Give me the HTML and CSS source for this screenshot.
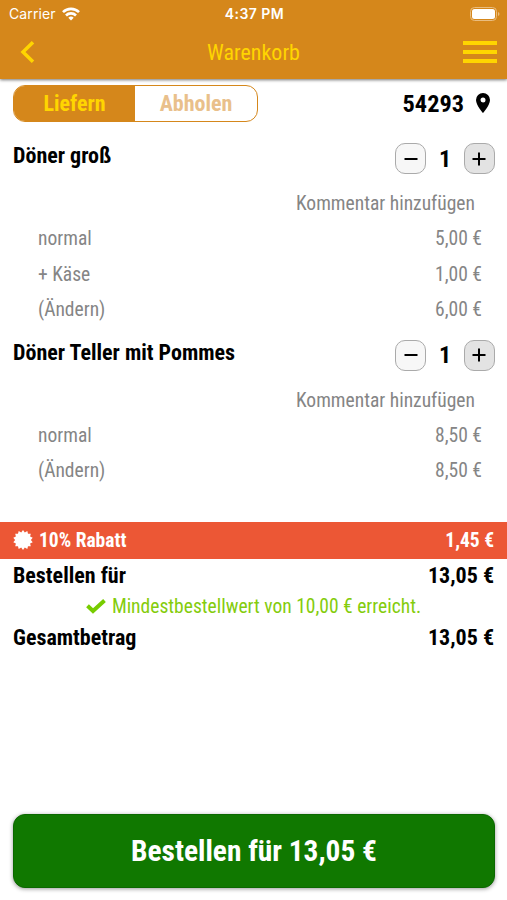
FILE: index.html
```html
<!DOCTYPE html>
<html lang="de">
<head>
    <meta charset="UTF-8">
    <meta name="viewport" content="width=device-width, initial-scale=1.0">
    <title>Warenkorb</title>
    <link rel="stylesheet" href="styles.css">
</head>
<body>
    <header class="header">
        <div class="statusbar">
            <div class="carrier">
                <span>Carrier</span>
                <svg width="18" height="14" viewBox="0 0 18 14" fill="none" stroke="#fff" stroke-width="2.6">
                    <path d="M1 5.2a11.3 11.3 0 0 1 16 0"/>
                    <path d="M4 8.5a7 7 0 0 1 10 0"/>
                    <path d="M6.3 10.8a3.8 3.8 0 0 1 5.4 0L9 13.6z" fill="#fff" stroke="none"/>
                </svg>
            </div>
            <div class="clock">4:37 PM</div>
            <svg class="battery" width="30" height="14" viewBox="0 0 30 14">
                <rect x="0.5" y="0.5" width="26" height="13" rx="4" fill="none" stroke="#e9bd80"/>
                <rect x="2" y="2" width="23" height="10" rx="2.5" fill="#fff"/>
                <path d="M28 5v4q1.500-.5 1.500-2T28 5z" fill="#e9bd80"/>
            </svg>
        </div>
        <div class="navbar">
            <svg class="back" width="16" height="24" viewBox="0 0 16 24" fill="none" stroke="#ffd500" stroke-width="3.500">
                <path d="M14 2.200L4 12l10 9.800"/>
            </svg>
            <h1>Warenkorb</h1>
            <div class="menu"><i></i><i></i><i></i></div>
        </div>
    </header>

    <main class="cart">
        <div class="toolbar">
            <div class="switch">
                <div class="option active">Liefern</div>
                <div class="option">Abholen</div>
            </div>
            <div class="location">
                <span>54293</span>
                <svg width="14" height="20" viewBox="0 0 14 20">
                    <path fill-rule="evenodd" d="M7 0a7 7 0 0 0-7 7c0 5.200 7 13 7 13s7-7.800 7-13a7 7 0 0 0-7-7zm0 4.500a2.500 2.500 0 1 1 0 5 2.500 2.500 0 0 1 0-5z"/>
                </svg>
            </div>
        </div>

        <section class="item">
            <div class="item-head">
                <h2>Döner groß</h2>
                <div class="stepper">
                    <button class="minus"><svg width="16" height="16" viewBox="0 0 16 16"><path d="M1.500 8h13"/></svg></button>
                    <span class="count">1</span>
                    <button class="plus"><svg width="16" height="16" viewBox="0 0 16 16"><path d="M1.500 8h13M8 1.500v13"/></svg></button>
                </div>
            </div>
            <div class="comment">Kommentar hinzufügen</div>
            <div class="line"><span>normal</span><span>5,00 €</span></div>
            <div class="line"><span>+ Käse</span><span>1,00 €</span></div>
            <div class="line"><span>(Ändern)</span><span>6,00 €</span></div>
        </section>

        <section class="item">
            <div class="item-head">
                <h2>Döner Teller mit Pommes</h2>
                <div class="stepper">
                    <button class="minus"><svg width="16" height="16" viewBox="0 0 16 16"><path d="M1.500 8h13"/></svg></button>
                    <span class="count">1</span>
                    <button class="plus"><svg width="16" height="16" viewBox="0 0 16 16"><path d="M1.500 8h13M8 1.500v13"/></svg></button>
                </div>
            </div>
            <div class="comment">Kommentar hinzufügen</div>
            <div class="line"><span>normal</span><span>8,50 €</span></div>
            <div class="line"><span>(Ändern)</span><span>8,50 €</span></div>
        </section>
    </main>

    <div class="discount">
        <svg width="20" height="20" viewBox="-10 -10 20 20">
            <path fill="#fff" d="M0-10L1.800-7.600 4.300-9 5-6.200 7.800-6.200 7.100-3.400 9.700-2.200 7.900 0 9.700 2.200 7.100 3.400 7.800 6.200 5 6.200 4.300 9 1.800 7.600 0 10-1.800 7.600-4.300 9-5 6.200-7.800 6.200-7.100 3.400-9.700 2.200-7.900 0-9.700-2.200-7.100-3.400-7.800-6.200-5-6.200-4.300-9-1.800-7.600z"/>
        </svg>
        <span class="label">10% Rabatt</span>
        <span>1,45 €</span>
    </div>

    <div class="total"><span>Bestellen für</span><span>13,05 €</span></div>
    <div class="minimum">
        <svg width="20" height="15" viewBox="0 0 20 15" fill="none" stroke="#77cc00" stroke-width="4">
            <path d="M1.500 6.800l5.500 5.200L18.500 1.500"/>
        </svg>
        <span>Mindestbestellwert von 10,00 € erreicht.</span>
    </div>
    <div class="total"><span>Gesamtbetrag</span><span>13,05 €</span></div>

    <button class="order">Bestellen für 13,05 €</button>
</body>
</html>
```
FILE: styles.css
```css
* {
    box-sizing: border-box;
}

body {
    font-family: 'Roboto Condensed', Roboto, sans-serif;
    font-stretch: 75%;
    margin: 0;
    height: 900px;
    display: flex;
    flex-direction: column;
    background: #fff;
    color: #000;
    overflow: hidden;
    white-space: nowrap;
}

h1, h2 {
    margin: 0;
    font-weight: normal;
}

svg {
    display: block;
    flex: none;
}

.header {
    height: 79px;
    flex: none;
    background: #d5871b;
    box-shadow: 0 1px 3px rgba(0, 0, 0, 0.55);
}

.statusbar {
    display: grid;
    grid-template-columns: 1fr auto 1fr;
    align-items: center;
    height: 27px;
    padding: 0 7px 0 9px;
    color: #fff;
    font-family: Inter, sans-serif;
    font-stretch: 100%;
    font-size: 14px;
}

.carrier {
    display: flex;
    align-items: center;
    gap: 6px;
    letter-spacing: 0.1px;
}

.clock {
    font-weight: 600;
    letter-spacing: 0.45px;
}

.battery {
    justify-self: end;
}

.navbar {
    display: grid;
    grid-template-columns: 1fr auto 1fr;
    align-items: center;
    height: 50px;
    padding: 0 10px;
}

.back {
    margin-left: 9px;
}

h1 {
    color: #ffd500;
    font-size: 22px;
}

.menu {
    justify-self: end;
    width: 34px;
    display: flex;
    flex-direction: column;
    gap: 5px;
}

.menu i {
    height: 4px;
    background: #ffd500;
}

.cart {
    flex: none;
    height: 443px;
    padding: 6px 12px 0 13px;
}

.toolbar {
    display: flex;
    justify-content: space-between;
    height: 37px;
    margin-bottom: 19px;
}

.switch {
    display: flex;
    width: 245px;
    border: 1px solid #d5871b;
    border-radius: 12px;
    overflow: hidden;
    font-size: 22px;
    font-weight: bold;
    color: #e9c08b;
}

.option {
    flex: 1;
    display: flex;
    align-items: center;
    justify-content: center;
}

.option.active {
    flex: 0 0 121px;
    background: #d5871b;
    color: #ffd500;
}

.location {
    display: flex;
    align-items: center;
    gap: 11.5px;
    padding-right: 5.5px;
    font-size: 24.3px;
    font-weight: bold;
}

.location svg {
    margin-top: -2px;
}

.item-head {
    display: flex;
    justify-content: space-between;
    height: 45px;
}

h2 {
    font-size: 22px;
    line-height: 30px;
    font-weight: bold;
}

.stepper {
    display: flex;
    align-items: center;
    justify-content: space-between;
    width: 100px;
    height: 32px;
    padding-top: 3px;
}

.stepper button {
    display: flex;
    align-items: center;
    justify-content: center;
    width: 31px;
    height: 31px;
    padding: 0;
    border: 1px solid #aaa;
    border-radius: 10px;
    background: #f7f7f7;
}

.stepper .plus {
    background: #e3e3e3;
}

.stepper path {
    stroke: #000;
    stroke-width: 2;
}

.count {
    font-size: 24px;
    font-weight: bold;
}

.comment {
    height: 35px;
    line-height: 35px;
    padding-right: 20px;
    text-align: right;
    font-size: 19.55px;
    color: #858585;
}

.line {
    display: flex;
    justify-content: space-between;
    height: 35.5px;
    line-height: 36.5px;
    padding: 0 13px 0 25px;
    font-size: 19.55px;
    color: #858585;
}

.item + .item {
    margin-top: 10px;
}

.discount {
    display: flex;
    flex: none;
    align-items: center;
    height: 37px;
    padding: 0 13px;
    background: #ec5735;
    color: #fff;
    font-size: 19.5px;
    font-weight: bold;
}

.discount svg {
    margin-top: -2px;
}

.discount .label {
    flex: 1;
    margin-left: 6px;
}

.total {
    display: flex;
    justify-content: space-between;
    height: 32px;
    line-height: 33px;
    padding: 0 13px;
    font-size: 22px;
    font-weight: bold;
}

.minimum {
    display: flex;
    align-items: center;
    justify-content: center;
    gap: 6px;
    height: 30px;
    font-size: 19.55px;
    color: #84cc0c;
}

.order {
    height: 74px;
    margin: auto 12px 12px 13px;
    border: 1px solid #0b6800;
    border-radius: 12px;
    background: #107800;
    color: #fff;
    box-shadow: 0 1px 4px rgba(0, 0, 0, 0.4);
    font-family: inherit;
    font-stretch: inherit;
    font-size: 29.4px;
    font-weight: bold;
}
```
